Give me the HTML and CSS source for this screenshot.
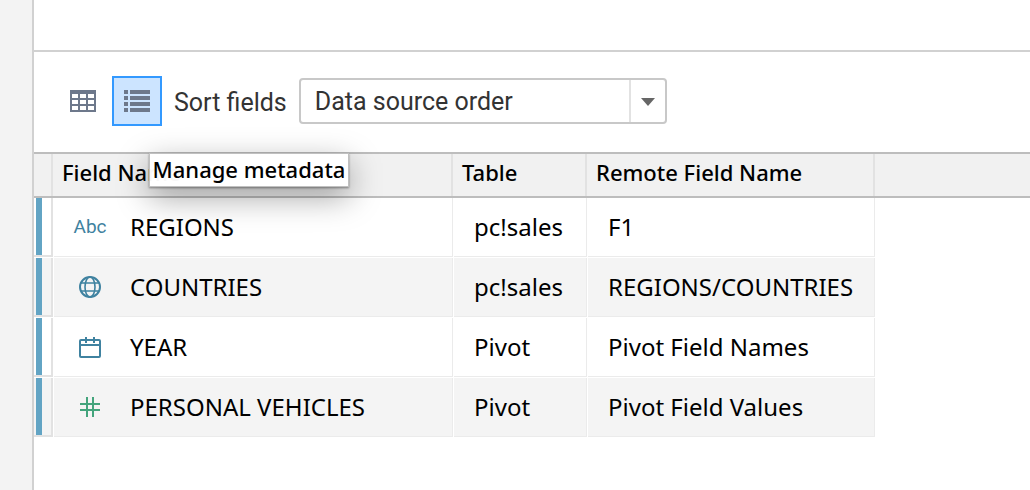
FILE: index.html
```html
<!DOCTYPE html>
<html lang="en">
<head>
<meta charset="utf-8">
<title>Data source fields</title>
<link rel="stylesheet" href="styles.css">
</head>
<body>
<aside class="rail"></aside>
<main class="pane">
  <div class="canvas"></div>
  <div class="toolbar">
    <button class="view" type="button" aria-label="Preview data">
      <svg width="26" height="22" viewBox="0 0 26 22"><path fill="#6d788b" fill-rule="evenodd" d="M0 0h26v22H0zM2 4h6v4H2zM10 4h6v4h-6zM18 4h6v4h-6zM2 10h6v4H2zM10 10h6v4h-6zM18 10h6v4h-6zM2 16h6v4H2zM10 16h6v4h-6zM18 16h6v4h-6z"/></svg>
    </button>
    <button class="view view-active" type="button" aria-label="Metadata" aria-describedby="tip">
      <svg width="26" height="22" viewBox="0 0 26 22"><path fill="#6d788b" d="M0 0h4v4H0zM6 0h20v4H6zM0 6h4v4H0zM6 6h20v4H6zM0 12h4v4H0zM6 12h20v4H6zM0 18h4v4H0zM6 18h20v4H6z"/></svg>
    </button>
    <label class="sort-label" for="sort">Sort fields</label>
    <div class="dropdown">
      <select class="sort" id="sort"><option>Data source order</option></select>
      <svg class="arrow" width="14" height="8" viewBox="0 0 14 8"><path fill="#666" d="M0 0h14L7 8z"/></svg>
    </div>
    <div class="tip" id="tip" role="tooltip">Manage metadata</div>
  </div>
  <table class="fields">
    <colgroup><col class="c-grip"><col class="c-name"><col class="c-table"><col class="c-remote"><col></colgroup>
    <thead>
      <tr><th></th><th>Field Name</th><th>Table</th><th>Remote Field Name</th><th></th></tr>
    </thead>
    <tbody>
      <tr>
        <td class="grip"><div class="bar"></div></td>
        <td><div class="name"><span class="type">Abc</span>REGIONS</div></td>
        <td>pc!sales</td><td>F1</td><td class="rest"></td>
      </tr>
      <tr>
        <td class="grip"><div class="bar"></div></td>
        <td><div class="name"><span class="type"><svg width="22" height="22" viewBox="0 0 22 22" fill="none" stroke="#3f82a0" stroke-width="2"><circle cx="11" cy="11" r="10"/><ellipse cx="11" cy="11" rx="5" ry="10" stroke-width="1.6"/><path stroke-width="1.6" d="M2 7h18M2 15h18"/></svg></span>COUNTRIES</div></td>
        <td>pc!sales</td><td>REGIONS/COUNTRIES</td><td class="rest"></td>
      </tr>
      <tr>
        <td class="grip"><div class="bar"></div></td>
        <td><div class="name"><span class="type"><svg width="22" height="22" viewBox="0 0 22 22" fill="none" stroke="#3f82a0" stroke-width="2"><rect x="1" y="4" width="20" height="17" rx="1"/><path d="M1 9h20M7 1v6M15 1v6"/></svg></span>YEAR</div></td>
        <td>Pivot</td><td>Pivot Field Names</td><td class="rest"></td>
      </tr>
      <tr>
        <td class="grip"><div class="bar"></div></td>
        <td><div class="name"><span class="type"><svg width="20" height="20" viewBox="0 0 20 20" fill="none" stroke="#43a47c" stroke-width="2"><path d="M0 7h20M0 13h20M7 0v20M13 0v20"/></svg></span>PERSONAL VEHICLES</div></td>
        <td>Pivot</td><td>Pivot Field Values</td><td class="rest"></td>
      </tr>
    </tbody>
  </table>
</main>
</body>
</html>
```
FILE: styles.css
```css
* { box-sizing: border-box; }
body {
  margin: 0;
  min-height: 100vh;
  display: flex;
  background: #fff;
  color: #000;
  font-family: "Noto Sans", "Open Sans", sans-serif;
}
.rail {
  flex: 0 0 34px;
  background: #f3f3f3;
  border-right: 2px solid #d1d1d1;
}
.pane { flex: 1; min-width: 0; }
.canvas { height: 52px; border-bottom: 2px solid #d1d1d1; }
.toolbar {
  position: relative;
  display: flex;
  align-items: center;
  height: 100px;
  padding: 0 24px 2px;
  color: #333;
  font-family: Roboto, "Liberation Sans", sans-serif;
  font-size: 25px;
}
.view {
  display: flex;
  align-items: center;
  justify-content: center;
  width: 50px;
  height: 50px;
  margin-right: 4px;
  padding: 0;
  background: none;
  border: 2px solid transparent;
}
.view-active { background: #cce4ff; border-color: #3399ff; }
.sort-label { margin: 2px 12px 0 8px; }
.dropdown { position: relative; width: 368px; height: 46px; }
.sort {
  appearance: none;
  width: 100%;
  height: 100%;
  padding: 0 52px 0 14px;
  border: 2px solid #c8c8c8;
  border-radius: 4px;
  background: linear-gradient(#e2e2e2, #e2e2e2) right 34px top / 2px 100% no-repeat #fff;
  color: #333;
  font: inherit;
}
.arrow {
  position: absolute;
  right: 12px;
  top: 20px;
  pointer-events: none;
}
.tip {
  position: absolute;
  z-index: 2;
  left: 115px;
  top: 101px;
  width: 200px;
  height: 34px;
  border: 1px solid #c0c0c0;
  background: rgba(255, 255, 255, 0.97);
  box-shadow: 0 1px 2px rgba(0, 0, 0, 0.4), 0 10px 32px rgba(0, 0, 0, 0.36);
  color: #000;
  font: 500 22px/30px "Noto Sans", sans-serif;
  text-align: center;
  white-space: nowrap;
}
.fields {
  width: 100%;
  table-layout: fixed;
  border-collapse: separate;
  border-spacing: 0;
}
.c-grip { width: 19px; }
.c-name { width: 400px; }
.c-table { width: 134px; }
.c-remote { width: 288px; }
th {
  height: 46px;
  padding: 0 9px 6px;
  border: solid #bdbdbd;
  border-width: 2px 0;
  background: linear-gradient(#e2e2e2, #e2e2e2) right top / 2px 100% no-repeat #f1f1f1;
  font-size: 22px;
  font-weight: 500;
  line-height: 30px;
  text-align: left;
  white-space: nowrap;
}
th:last-child { background: #f1f1f1; }
td {
  height: 60px;
  padding: 0 20px 2px;
  border: solid #fff;
  border-width: 0 0 1px 1px;
  box-shadow: inset -1px -1px #ebebeb;
  font-size: 24px;
  line-height: 32px;
  white-space: nowrap;
}
tr:nth-child(even) td { background: #f4f4f4; }
.grip {
  padding: 0 0 0 2px;
  border-left: 0;
  box-shadow: inset -2px -2px #e2e2e2;
}
.bar { width: 6px; height: 57px; margin-bottom: 2px; background: #62a4c4; }
.name { display: flex; align-items: center; }
.type {
  display: flex;
  justify-content: center;
  width: 32px;
  margin-right: 24px;
  color: #3f82a0;
  font: 19px/32px Roboto, sans-serif;
}
tr:nth-child(even) .rest, .rest { background: none; border: 0; box-shadow: none; }
```
